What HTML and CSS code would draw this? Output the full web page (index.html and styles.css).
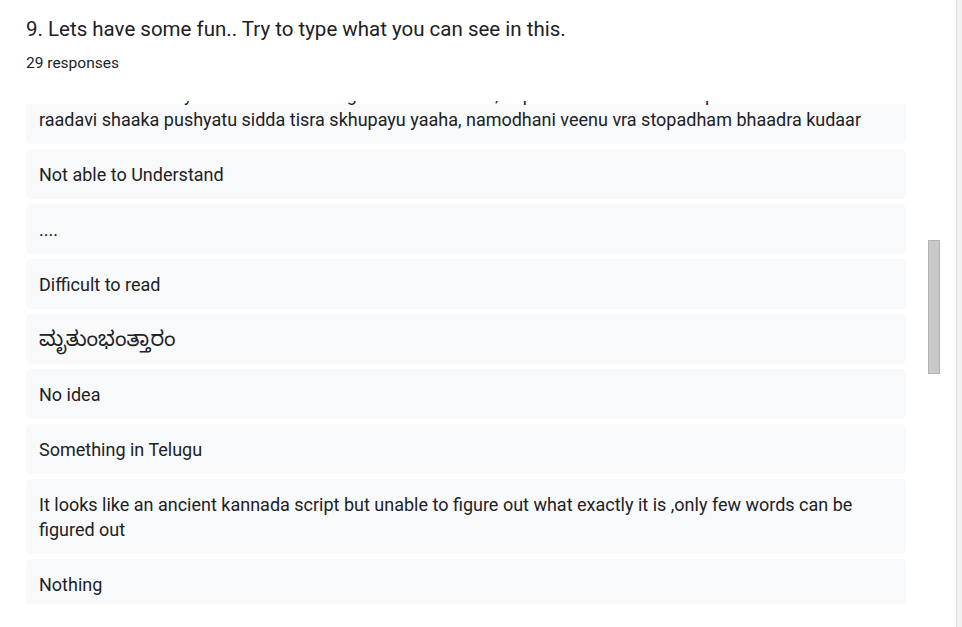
FILE: index.html
```html
<!DOCTYPE html>
<html lang="en">
<head>
<meta charset="utf-8">
<title>Responses</title>
<link rel="stylesheet" href="styles.css">
</head>
<body>
<div class="page">
  <main class="main">
    <h2 class="question">9. Lets have some fun.. Try to type what you can see in this.</h2>
    <div class="count">29 responses</div>
    <div class="panel">
      <div class="list">
        <div class="list-inner">
          <div class="item item-first">mudavi shaakana yoosatu sidda tiru raghu kaaleva saaha, napodhani meenu vra stopa
raadavi shaaka pushyatu sidda tisra skhupayu yaaha, namodhani veenu vra stopadham bhaadra kudaar</div>
          <div class="item">Not able to Understand</div>
          <div class="item">....</div>
          <div class="item">Difficult to read</div>
          <div class="item"><span class="kn">ಮೃತುಂಭಂತ್ತಾರಂ</span></div>
          <div class="item">No idea</div>
          <div class="item">Something in Telugu</div>
          <div class="item">It looks like an ancient kannada script but unable to figure out what exactly it is ,only few words can be figured out</div>
          <div class="item">Nothing</div>
          <div class="item">I can't read it</div>
        </div>
      </div>
      <div class="track">
        <div class="thumb"></div>
      </div>
    </div>
  </main>
  <div class="edge"></div>
</div>
</body>
</html>
```

FILE: styles.css
```css
html, body {
  margin: 0;
  padding: 0;
  background: #ffffff;
}

body {
  font-family: Roboto, "Noto Sans", "Noto Sans Kannada", "Noto Sans Telugu", sans-serif;
  color: #202124;
}

.page {
  display: flex;
  height: 627px;
  overflow: hidden;
}

.main {
  flex: 1;
  padding-left: 26px;
  padding-top: 15px;
}

.question {
  margin: 0;
  font-size: 20.5px;
  font-weight: 400;
  line-height: 28px;
  letter-spacing: 0;
}

.count {
  margin-top: 10px;
  font-size: 15.5px;
  line-height: 20px;
}

.panel {
  display: flex;
  margin-top: 28px;
}

.list {
  width: 880px;
  height: 503px;
  overflow: hidden;
}

.list-inner {
  display: flex;
  flex-direction: column;
  gap: 5px;
  margin-top: -32px;
}

.item {
  background: #f8f9fa;
  border-radius: 5px;
  padding: 13px 12px 12px 13px;
  font-size: 18px;
  line-height: 25px;
  white-space: pre-line;
}

.item-first {
  background: linear-gradient(#ffffff 35px, #f8f9fa 35px);
}

.kn {
  font-size: 21px;
}

.track {
  margin-left: 22px;
  width: 12px;
  padding-top: 139px;
}

.thumb {
  width: 10px;
  height: 132px;
  background: #c9c9c9;
  border: 1px solid #b3b3b3;
}

.edge {
  width: 5px;
  border-left: 1px solid #dedede;
  background: #f1f1f1;
}
```
